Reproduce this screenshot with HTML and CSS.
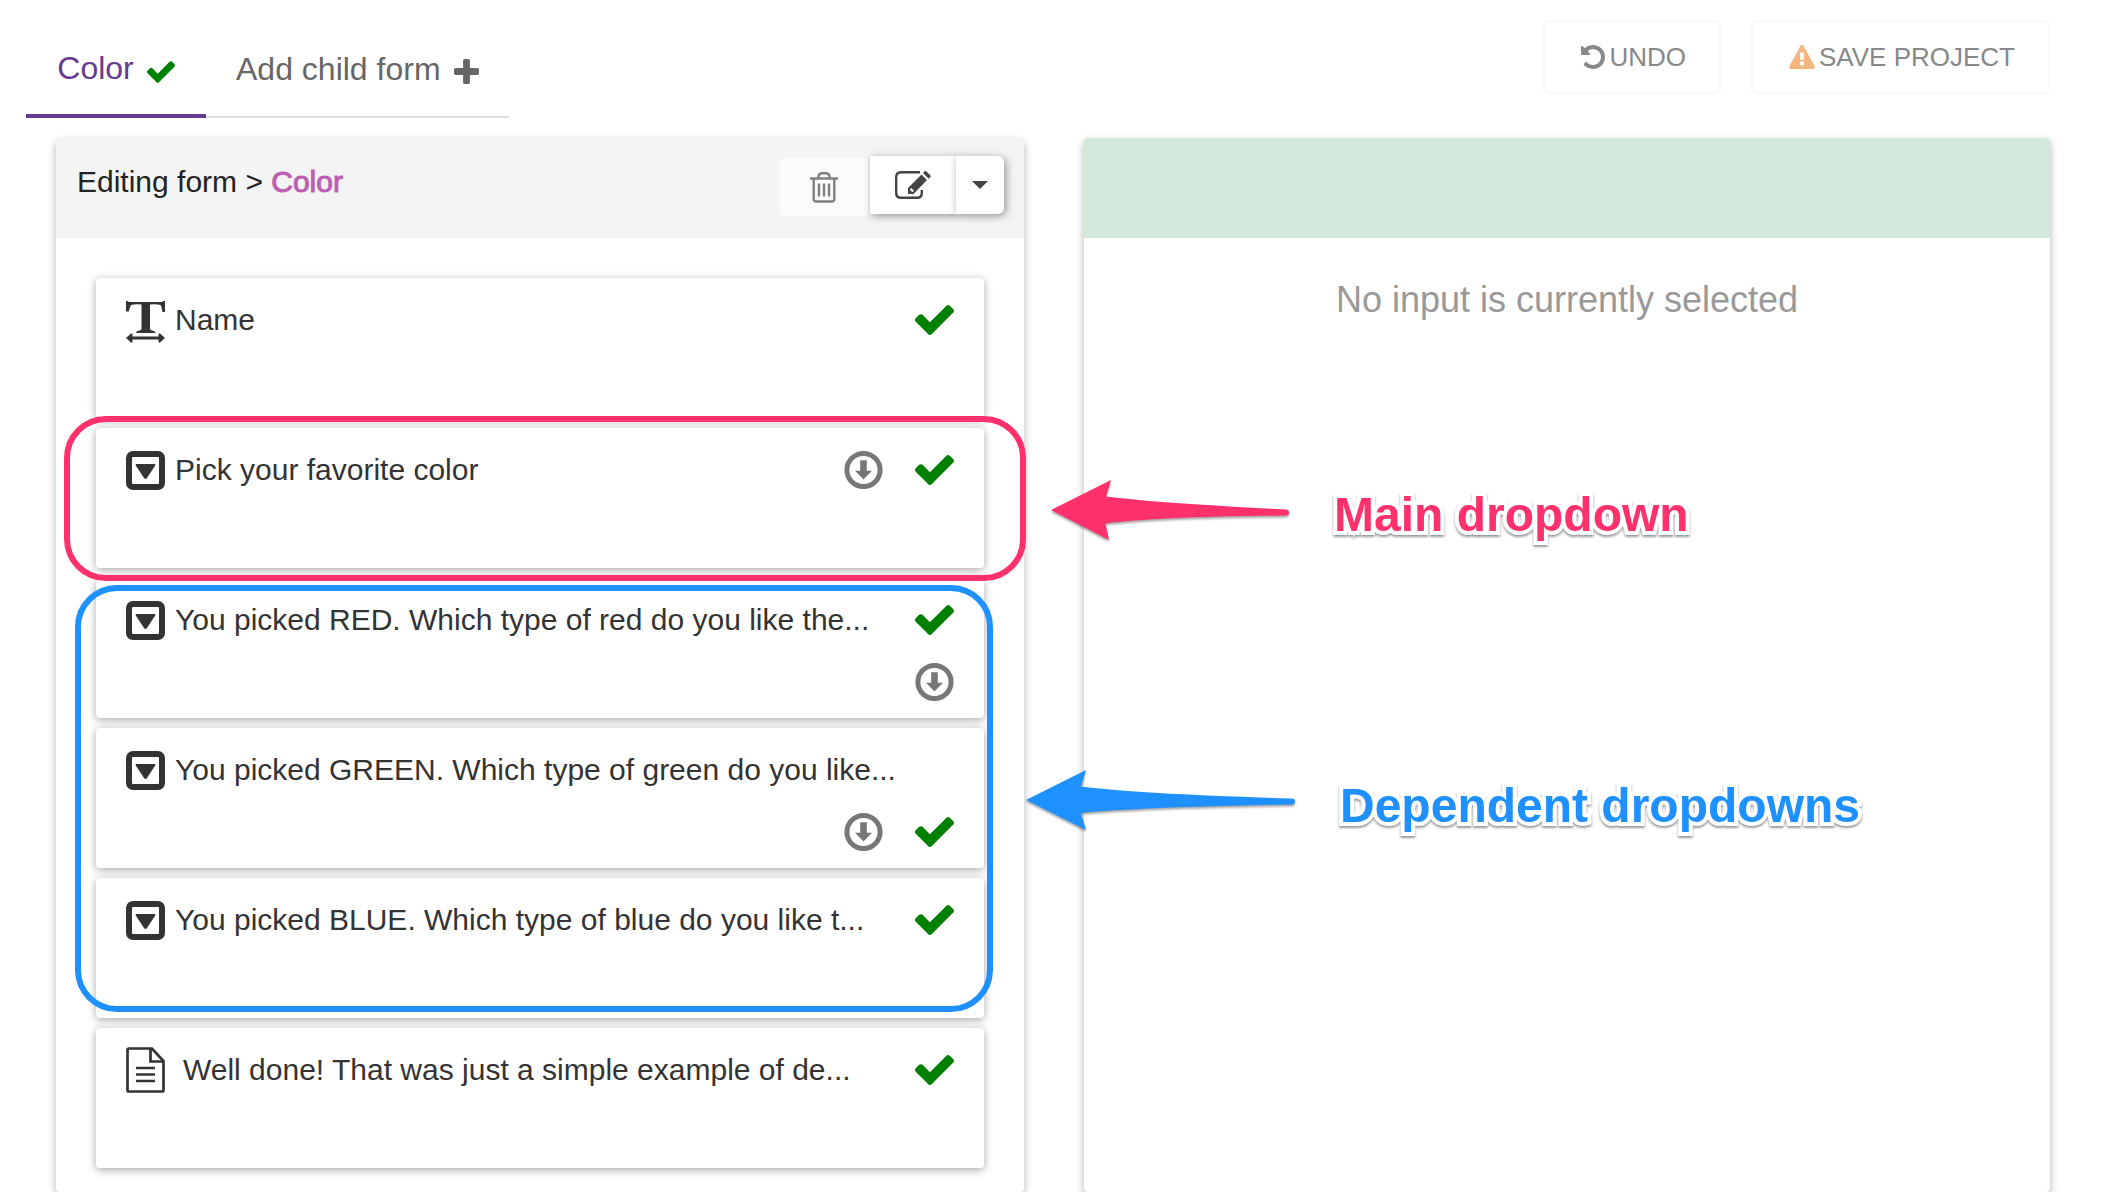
FILE: index.html
```html
<!DOCTYPE html>
<html lang="en">
<head>
<meta charset="utf-8">
<title>Form editor</title>
<link rel="stylesheet" href="styles.css">
</head>
<body>
<svg class="sprite" aria-hidden="true">
  <symbol id="check" viewBox="121 334 1550 1188"><path d="M1671 566q0 40-28 68l-724 724-136 136q-28 28-68 28t-68-28l-136-136-362-362q-28-28-28-68t28-68l136-136q28-28 68-28t68 28l294 295 656-657q28-28 68-28t68 28l136 136q28 28 28 68z"/></symbol>
  <symbol id="plus" viewBox="192 128 1408 1408"><path d="M1600 736v192q0 40-28 68t-68 28h-416v416q0 40-28 68t-68 28h-192q-40 0-68-28t-28-68v-416h-416q-40 0-68-28t-28-68v-192q0-40 28-68t68-28h416v-416q0-40 28-68t68-28h192q40 0 68 28t28 68v416h416q40 0 68 28t28 68z"/></symbol>
  <symbol id="undo" viewBox="128 128 1536 1536"><path d="M1664 896q0 156-61 298t-164 245-245 164-298 61q-172 0-327-72.5t-264-204.5q-7-10-6.5-22.5t8.5-20.5l137-138q10-9 25-9 16 2 23 12 73 95 179 147t225 52q104 0 198.5-40.5t163.5-109.5 109.5-163.5 40.5-198.5-40.5-198.5-109.5-163.5-163.5-109.5-198.5-40.5q-98 0-188 35.5t-160 101.5l137 138q31 30 14 69-17 40-59 40h-448q-26 0-45-19t-19-45v-448q0-42 40-59 39-17 69 14l130 129q107-101 244.5-156.5t284.5-55.5q156 0 298 61t245 164 164 245 61 298z"/></symbol>
  <symbol id="warning" viewBox="0 0 1792 1664"><path d="M1024 1375v-190q0-14-9.500-23.500t-22.500-9.500h-192q-13 0-22.500 9.500t-9.500 23.500v190q0 14 9.500 23.500t22.500 9.500h192q13 0 22.500-9.500t9.500-23.500zm-2-374l18-459q0-12-10-19-13-11-24-11h-220q-11 0-24 11-10 7-10 21l17 457q0 10 10 16.500t24 6.500h185q14 0 23.500-6.500t10.500-16.500zm-14-934l768 1408q35 63-2 126-17 29-46.500 46t-63.500 17h-1536q-34 0-63.500-17t-46.500-46q-37-63-2-126l768-1408q17-31 47-49t65-18 65 18 47 49z"/></symbol>
  <symbol id="down" viewBox="0 0 39 39"><circle cx="19.500" cy="19.500" r="16.600" fill="none" stroke="currentColor" stroke-width="5"/><path d="M16.200 9.700h6.600v10.500h5.200l-8.500 8.800-8.500-8.800h5.200z"/></symbol>
  <symbol id="select" viewBox="0 0 39 39"><rect x="3" y="3" width="33" height="33" rx="4" fill="none" stroke="currentColor" stroke-width="6"/><path d="M10.500 13h18q1.500 0 .7 1.500l-8.200 12.500q-1.500 1.800-3 0l-8.200-12.500q-.8-1.500.7-1.500z"/></symbol>
  <symbol id="textwidth" viewBox="0 0 39 42"><path d="M0 0h1.500l1.500 1h33l1.500-1H39v11h-2.500q-1-5.500-2-7-3-1-10.500-.6V28q0 1 3 1.700 2.500.5 2.500 2.300H10q0-1.800 2.500-2.300 3-.7 3-1.700V3.400Q8 3 5 4q-1 1.500-2.300 6.500H0z"/><path d="M0 37l5-4.500q1.500-.5 1.500 1V35.500h26V33.500q0-1.500 1.500-1L39 37l-5 4.500q-1.500.5-1.500-1V38.500h-26v2q0 1.500-1.500 1z"/></symbol>
  <symbol id="doc" viewBox="0 0 39 46"><path d="M3 1.500h23L37.500 14v29q0 1.500-1.500 1.500H3q-1.500 0-1.500-1.500V3q0-1.500 1.500-1.500zM24.500 2v12.500H37.500M10 21h19M10 27.500h19M10 34h19" fill="none" stroke="currentColor" stroke-width="2.700"/></symbol>
  <symbol id="trash" viewBox="0 0 28 31"><path d="M0 6.500h28M3.700 7v20q0 2.500 2.300 2.500h16q2.300 0 2.300-2.500V7M8 6q1-4.700 3.500-4.700h5Q19 1.300 20 6M9 11.500v13M14 11.500v13M19 11.500v13" fill="none" stroke="currentColor" stroke-width="2.400"/></symbol>
  <symbol id="edit" viewBox="0 0 36 28"><path d="M25 1.200H6Q1.200 1.200 1.200 6v16q0 4.800 4.800 4.800h16q4.800 0 4.800-4.800v-3" fill="none" stroke="currentColor" stroke-width="2.400"/><path fill-rule="evenodd" d="M13 17L26.500 3.500l5.500 5.500L18.500 23H13zM15.200 18l-.2 1.500h1.500v1.500l1.500-.2 1-1-2.800-2.800z"/><path d="M28 2l1.500-1.500q1-1 2 0l3.700 3.700q1 1 0 2L33.500 7.700z"/></symbol>
  <symbol id="caret" viewBox="0 0 16 8"><path d="M0 0h16L8 8z"/></symbol>
</svg>

<header class="topbar">
  <nav class="tabs">
    <a class="tab tab-active" href="#color">Color <svg class="tab-check"><use href="#check"/></svg></a>
    <a class="tab" href="#add">Add child form <svg class="tab-plus"><use href="#plus"/></svg></a>
  </nav>
  <div class="actions">
    <button class="btn" type="button"><svg class="btn-icon"><use href="#undo"/></svg>UNDO</button>
    <button class="btn" type="button"><svg class="btn-icon warn"><use href="#warning"/></svg>SAVE PROJECT</button>
  </div>
</header>

<main class="workspace">
  <section class="panel">
    <div class="panel-head">
      <h1 class="title">Editing form &gt; <span class="form-name">Color</span></h1>
      <div class="tools">
        <button class="tool tool-trash" type="button" aria-label="Delete"><svg class="i-trash"><use href="#trash"/></svg></button>
        <button class="tool tool-edit" type="button" aria-label="Edit"><svg class="i-edit"><use href="#edit"/></svg></button>
        <button class="tool tool-more" type="button" aria-label="More"><svg class="i-caret"><use href="#caret"/></svg></button>
      </div>
    </div>
    <div class="list">
      <div class="card">
        <span class="field"><svg class="i-text"><use href="#textwidth"/></svg>Name</span>
        <svg class="mark ok"><use href="#check"/></svg>
      </div>
      <div class="card">
        <span class="field"><svg class="i-select"><use href="#select"/></svg>Pick your favorite color</span>
        <svg class="mark ok"><use href="#check"/></svg>
        <svg class="mark down"><use href="#down"/></svg>
      </div>
      <div class="card">
        <span class="field"><svg class="i-select"><use href="#select"/></svg>You picked RED. Which type of red do you like the...</span>
        <svg class="mark ok"><use href="#check"/></svg>
        <svg class="mark down"><use href="#down"/></svg>
      </div>
      <div class="card">
        <span class="field"><svg class="i-select"><use href="#select"/></svg>You picked GREEN. Which type of green do you like...</span>
        <svg class="mark ok"><use href="#check"/></svg>
        <svg class="mark down"><use href="#down"/></svg>
      </div>
      <div class="card">
        <span class="field"><svg class="i-select"><use href="#select"/></svg>You picked BLUE. Which type of blue do you like t...</span>
        <svg class="mark ok"><use href="#check"/></svg>
      </div>
      <div class="card">
        <span class="field field-note"><svg class="i-doc"><use href="#doc"/></svg>Well done! That was just a simple example of de...</span>
        <svg class="mark ok"><use href="#check"/></svg>
      </div>
      <div class="outline outline-main"></div>
      <div class="outline outline-dependent"></div>
    </div>
  </section>

  <section class="panel panel-detail">
    <div class="panel-head head-green"></div>
    <p class="empty">No input is currently selected</p>
    <svg class="arrow arrow-main" viewBox="0 0 240 62"><path d="M0 30L60 0 55 16.500Q105 23 235 29.500q3 0 3 3t-3 3Q105 37 54.500 43.500L58 60z"/></svg>
    <p class="note note-main">Main dropdown</p>
    <svg class="arrow arrow-dependent" viewBox="0 0 270 62"><path d="M0 30L60 0 55 16.500Q115 24 266 28.500q3 0 3 3t-3 3Q115 37 55 43L60 60z"/></svg>
    <p class="note note-dependent">Dependent dropdowns</p>
  </section>
</main>
</body>
</html>
```
FILE: styles.css
```css
* { box-sizing: border-box; }
body {
  margin: 0;
  background: #fff;
  color: #333;
  font: 30px/36px "Liberation Sans", Arial, sans-serif;
}
svg { fill: currentColor; flex: none; }
.sprite { display: none; }
button { font: inherit; color: inherit; cursor: pointer; }

.topbar {
  display: flex;
  justify-content: space-between;
  align-items: flex-start;
  padding: 20px 54px 20px 26px;
}
.tabs { display: flex; font-size: 32px; }
.tab {
  display: flex;
  align-items: center;
  justify-content: center;
  gap: 13px;
  min-width: 180px;
  height: 98px;
  padding: 2px 30px 0;
  color: #666;
  text-decoration: none;
  border-bottom: 2px solid #dcdcdc;
}
.tab-active { color: #663a91; border-bottom: 4px solid #663a91; }
.tab-check { width: 28px; height: 22px; margin-top: 8px; color: green; }
.tab-plus { width: 25px; height: 25px; margin-top: 4px; }

.actions { display: flex; gap: 30px; }
.btn {
  display: flex;
  align-items: center;
  gap: 4px;
  height: 74px;
  padding: 0 33px 0 36px;
  background: #fff;
  border: 2px solid #f8f8f8;
  border-radius: 6px;
  color: #888;
  font-size: 26px;
}
.btn-icon { width: 24px; height: 24px; }
.warn { width: 26px; color: #f5b57f; }

.workspace {
  display: grid;
  grid-template-columns: 968fr 966fr;
  gap: 60px;
  padding: 0 54px 0 56px;
}
.panel {
  position: relative;
  background: #fff;
  border-radius: 4px;
  box-shadow: 0 4px 8px rgba(0, 0, 0, 0.3);
}
.panel-head {
  display: flex;
  justify-content: space-between;
  align-items: flex-start;
  height: 100px;
  padding: 18px 20px 0 21px;
  background: #f4f4f4;
}
.head-green { background: #d1e8db; border-radius: 4px 4px 0 0; }
.title { margin: 8px 0 0; font-size: 30px; font-weight: 400; color: #222; }
.form-name { color: #bd5fb3; -webkit-text-stroke: 1px #bd5fb3; }

.tools { display: flex; }
.tool {
  display: flex;
  align-items: center;
  justify-content: center;
  height: 58px;
  padding: 0;
  border: 0;
  background: #fff;
  color: #444;
}
.tool-trash { width: 88px; margin: 2px 2px 0 0; background: #fbfbfb; color: #808080; border-radius: 4px; }
.tool-edit { width: 86px; box-shadow: 2px 2px 8px rgba(0, 0, 0, 0.4); }
.tool-more { width: 48px; border-radius: 0 6px 6px 0; box-shadow: 2px 2px 8px rgba(0, 0, 0, 0.4); }
.i-trash { width: 28px; height: 31px; }
.i-edit { width: 36px; height: 28px; }
.i-caret { width: 16px; height: 8px; }

.list {
  position: relative;
  display: flex;
  flex-direction: column;
  gap: 10px;
  margin: 40px 40px 24px;
}
.card {
  min-height: 140px;
  padding: 11px 30px 5px;
  background: #fff;
  border-radius: 4px;
  box-shadow: 0 2px 8px rgba(0, 0, 0, 0.35);
}
.card::after { content: ""; display: block; clear: both; }
.field { float: left; display: flex; align-items: center; gap: 10px; height: 62px; }
.field-note { gap: 18px; }
.i-text { width: 39px; height: 42px; margin-top: 4px; }
.i-select { width: 39px; height: 39px; }
.i-doc { width: 39px; height: 46px; }
.mark { float: right; width: 39px; height: 62px; margin-left: 32px; }
.ok { color: green; }
.down { color: #777; }

.outline { position: absolute; border: 6px solid; border-radius: 42px; }
.outline-main { top: 138px; left: -32px; right: -42px; height: 165px; color: #ff316c; }
.outline-dependent { top: 307px; left: -21px; right: -9px; height: 427px; color: #1e90ff; }

.empty { margin: 40px 20px; font-size: 36px; line-height: 44px; text-align: center; color: #999; }
.arrow { position: absolute; overflow: visible; filter: drop-shadow(0 2px 1px rgba(0, 0, 0, 0.35)); }
.arrow-main { left: -33px; top: 342px; width: 240px; height: 62px; color: #ff316c; }
.arrow-dependent { left: -58px; top: 632px; width: 270px; height: 62px; color: #1e90ff; }
.note {
  position: absolute;
  margin: 0;
  font-size: 48px;
  line-height: 56px;
  font-weight: 700;
  white-space: nowrap;
  paint-order: stroke fill;
  -webkit-text-stroke: 8px #fff;
  filter: drop-shadow(0 2px 1px rgba(0, 0, 0, 0.4));
}
.note-main { left: 250px; top: 349px; color: #ff316c; }
.note-dependent { left: 256px; top: 640px; color: #1e90ff; }
```
